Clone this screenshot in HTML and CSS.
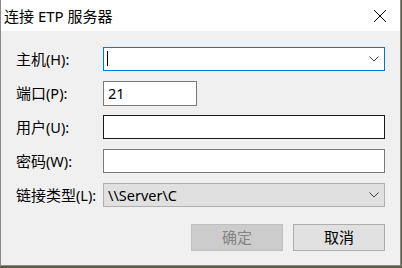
FILE: index.html
```html
<!DOCTYPE html>
<html lang="zh-CN">
<head>
<meta charset="utf-8">
<title>连接 ETP 服务器</title>
<link rel="stylesheet" href="styles.css">
</head>
<body>
<div class="window">
  <div class="titlebar">
    <span class="title">连接 ETP 服务器</span>
    <svg class="close" width="14" height="14" viewBox="0 0 14 14"><path d="M1 1 L13 13 M13 1 L1 13" stroke="#000" stroke-width="1" fill="none"/></svg>
  </div>
  <div class="content">
    <div class="form">
      <div class="label">主机<span class="lat">(H):</span></div>
      <div class="field combo focused"><span class="caret"></span><svg class="chev" width="10" height="6" viewBox="0 0 10 6"><path d="M0.5 0.5 L5 5 L9.5 0.5" stroke="#444" stroke-width="1" fill="none"/></svg></div>

      <div class="label">端口<span class="lat">(P):</span></div>
      <div class="field short"><span class="val">21</span></div>

      <div class="label">用户<span class="lat">(U):</span></div>
      <div class="field hover"></div>

      <div class="label">密码<span class="lat">(W):</span></div>
      <div class="field"></div>

      <div class="label">链接类型<span class="lat">(L):</span></div>
      <div class="field combo disabled"><span class="val">\\Server\C</span><svg class="chev" width="10" height="6" viewBox="0 0 10 6"><path d="M0.5 0.5 L5 5 L9.5 0.5" stroke="#444" stroke-width="1" fill="none"/></svg></div>
    </div>
    <div class="buttons">
      <div class="btn btn-disabled">确定</div>
      <div class="btn">取消</div>
    </div>
  </div>
</div>
</body>
</html>
```

FILE: styles.css
```css
html, body {
  margin: 0;
  padding: 0;
}
body {
  background: #5e5b43;
  width: 402px;
  height: 268px;
  overflow: hidden;
  font-family: "Noto Sans", "Noto Sans CJK SC", sans-serif;
  font-size: 15px;
  color: #000;
}
.window {
  width: 401px;
  height: 266px;
  box-sizing: border-box;
  border: 1px solid #8a8a8a;
  border-top: none;
  background: #f0f0f0;
  display: flex;
  flex-direction: column;
}
.titlebar {
  height: 31px;
  flex: none;
  background: #fff;
  display: flex;
  align-items: center;
  justify-content: space-between;
  padding: 0 13px 0 3px;
}
.title {
  font-size: 15px;
  line-height: 1;
  margin-top: 1px;
}
.close {
  display: block;
  margin-top: 1px;
}
.content {
  padding: 16px 15px 0 15px;
  display: flex;
  flex-direction: column;
}
.form {
  display: grid;
  grid-template-columns: 87px 1fr;
  grid-template-rows: 24px 24px 24px 24px 24px;
  row-gap: 10px;
  align-items: center;
}
.label {
  font-size: 15px;
  line-height: 1;
  white-space: nowrap;
}
.lat {
  font-size: 14.5px;
}
.field {
  height: 24px;
  box-sizing: border-box;
  background: #fff;
  border: 1px solid #7a7a7a;
  display: flex;
  align-items: center;
  padding-left: 4px;
}
.field.combo.focused {
  margin-bottom: 1px;
  height: 24px;
}
.field.short {
  width: 94px;
  height: 25px;
}
.field.hover {
  border-color: #1b1b1b;
}
.field.focused {
  border-color: #0078d7;
}
.field.disabled {
  background: #e0e0e0;
  border-color: #b0b0b0;
}
.val {
  font-size: 14.5px;
  line-height: 1;
  color: #000;
}
.caret {
  display: block;
  width: 1px;
  height: 15px;
  background: #000;
  margin-left: -1px;
}
.combo .chev {
  margin-left: auto;
  margin-right: 5px;
  display: block;
}
.buttons {
  margin-top: 17px;
  display: flex;
  justify-content: flex-end;
  gap: 10px;
}
.btn {
  width: 92px;
  height: 27px;
  box-sizing: border-box;
  background: #e1e1e1;
  border: 1px solid #adadad;
  display: flex;
  align-items: center;
  justify-content: center;
  font-size: 15px;
  line-height: 1;
  color: #000;
}
.btn-disabled {
  background: #cccccc;
  border-color: #bfbfbf;
  color: #838383;
}
```
